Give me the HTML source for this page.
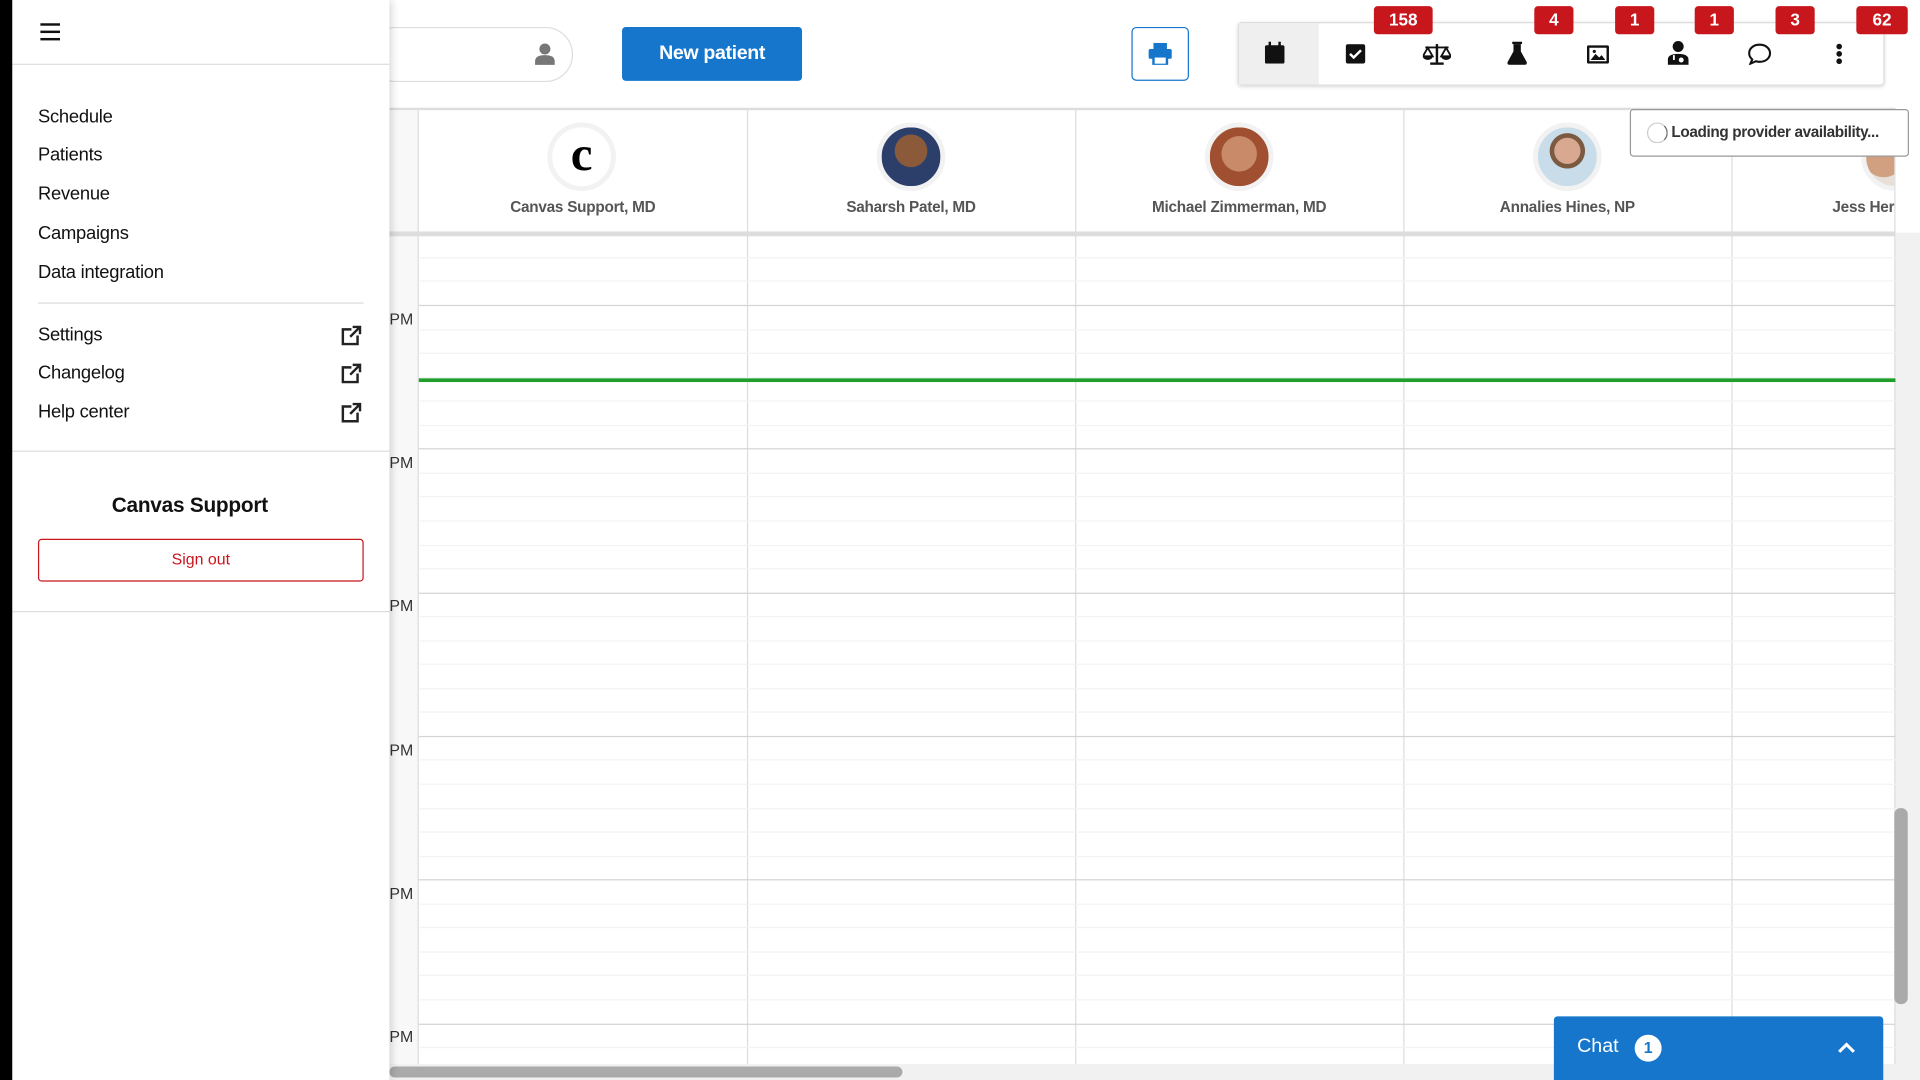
<!DOCTYPE html>
<html><head><meta charset="utf-8"><style>
*{box-sizing:border-box;margin:0;padding:0}
html,body{width:1920px;height:1080px;overflow:hidden;background:#fff;font-family:"Liberation Sans",sans-serif}
#w{position:absolute;left:0;top:0;width:1568px;height:882px;transform:scale(1.22449);transform-origin:0 0;overflow:hidden;background:#fff}
.a{position:absolute}
.sb{left:10px;top:0;width:308px;height:882px;background:#fff;box-shadow:2px 0 6px rgba(0,0,0,.15);z-index:5}
.mi{position:absolute;left:21px;font-size:15px;color:#111;letter-spacing:-.2px}
.hr{position:absolute;height:1px;background:#ddd}
.badge{position:absolute;top:5px;height:23px;background:#c8161d;color:#fff;font-weight:bold;font-size:14px;line-height:23px;text-align:center;border-radius:3px}
.col{position:absolute;top:90px;width:1px;height:792px;background:#ddd}
.av{position:absolute;top:100px;width:56px;height:56px;border-radius:50%;background:#eee;border:4px solid #f2f2f2}
.nm{position:absolute;top:162px;width:268px;text-align:center;font-size:12.5px;font-weight:bold;color:#555;letter-spacing:-.2px}
.pm{position:absolute;left:318px;font-size:13px;color:#333}
</style></head><body><div id="w">
<div class="a" style="left:0;top:0;width:10px;height:882px;background:#000;z-index:6"></div>
<div class="a sb">
 <div class="a" style="left:23px;top:19px;width:16px;height:14px;border-top:2.5px solid #111;border-bottom:2.5px solid #111"><div style="margin-top:3.5px;height:2.5px;background:#111"></div></div>
 <div class="hr" style="left:0;top:52px;width:308px"></div>
 <div class="mi" style="top:87px">Schedule</div>
 <div class="mi" style="top:118px">Patients</div>
 <div class="mi" style="top:150px">Revenue</div>
 <div class="mi" style="top:182px">Campaigns</div>
 <div class="mi" style="top:214px">Data integration</div>
 <div class="hr" style="left:21px;top:247px;width:266px"></div>
 <div class="mi" style="top:265px">Settings</div>
 <div class="mi" style="top:296px">Changelog</div>
 <div class="mi" style="top:328px">Help center</div>
 <svg class="a" style="left:268px;top:265px" width="18" height="80" viewBox="0 0 18 80" fill="none" stroke="#222" stroke-width="2"><g><path d="M14 9v7H2V4h7M10 2h6v6M16 2 8 10"/></g><g transform="translate(0,31)"><path d="M14 9v7H2V4h7M10 2h6v6M16 2 8 10"/></g><g transform="translate(0,63)"><path d="M14 9v7H2V4h7M10 2h6v6M16 2 8 10"/></g></svg>
 <div class="hr" style="left:0;top:368px;width:308px"></div>
 <div class="a" style="left:0;top:403px;width:290px;text-align:center;font-size:17px;font-weight:bold;color:#111;letter-spacing:-.2px">Canvas Support</div>
 <div class="a" style="left:21px;top:440px;width:266px;height:35px;border:1.5px solid #c8161d;border-radius:3px;color:#c8161d;font-size:13px;text-align:center;line-height:32px">Sign out</div>
 <div class="hr" style="left:0;top:499px;width:308px"></div>
</div>
<div class="a" style="left:300px;top:22px;width:168px;height:45px;border:1px solid #ddd;border-radius:23px"></div>
<svg class="a" style="left:436px;top:34px" width="18" height="20" viewBox="0 0 18 20"><circle cx="9" cy="6" r="4.5" fill="#777"/><path d="M1 19v-3q0-5 8-5t8 5v3z" fill="#777"/></svg>
<div class="a" style="left:508px;top:22px;width:147px;height:44px;background:#1576cc;border-radius:3px;color:#fff;font-weight:bold;font-size:16px;text-align:center;line-height:44px;letter-spacing:-.3px">New patient</div>
<div class="a" style="left:924px;top:22px;width:47px;height:44px;border:1.5px solid #1576cc;border-radius:4px"></div>
<svg class="a" style="left:938px;top:35px" width="19" height="18" viewBox="0 0 19 18"><rect x="4" y="0" width="11" height="5" fill="#1576cc"/><rect x="0" y="5" width="19" height="8" rx="1.5" fill="#1576cc"/><rect x="4" y="11" width="11" height="7" fill="#fff" stroke="#1576cc" stroke-width="2"/></svg>
<div class="a" style="left:1011px;top:18px;width:528px;height:52px;border:1px solid #ddd;border-radius:3px;box-shadow:0 1px 3px rgba(0,0,0,.15)"></div>
<div class="a" style="left:1012px;top:19px;width:65px;height:50px;background:#efefef"></div>
<svg class="a" style="left:1033px;top:34px" width="16" height="18" viewBox="0 0 16 18"><rect x="0" y="3" width="16" height="15" rx="1.5" fill="#111"/><rect x="3" y="0" width="2" height="4" fill="#111"/><rect x="11" y="0" width="2" height="4" fill="#111"/></svg>
<svg class="a" style="left:1099px;top:36px" width="16" height="16" viewBox="0 0 16 16"><rect width="16" height="16" rx="2" fill="#111"/><path d="M3.5 8l3 3 6-6" stroke="#fff" stroke-width="2" fill="none"/></svg>
<svg class="a" style="left:1162px;top:35px" width="23" height="18" viewBox="0 0 23 18" fill="#111"><rect x="10.5" y="1" width="2" height="15"/><rect x="6" y="16" width="11" height="2"/><rect x="2" y="3" width="19" height="1.5"/><path d="M0 11h8l-4-7zM15 11h8l-4-7z" fill="none" stroke="#111" stroke-width="1.5"/><path d="M0 11h8a4 3 0 0 1-8 0zM15 11h8a4 3 0 0 1-8 0z"/></svg>
<svg class="a" style="left:1231px;top:34px" width="16" height="19" viewBox="0 0 16 19" fill="#111"><rect x="4" y="0" width="8" height="2"/><path d="M5 2h6v6l5 9q0 2-2 2H2q-2 0-2-2l5-9z"/></svg>
<svg class="a" style="left:1296px;top:37px" width="18" height="15" viewBox="0 0 18 15"><rect width="18" height="15" rx="1.5" fill="#111"/><rect x="2" y="2" width="14" height="11" fill="#fff"/><path d="M3 12l4-5 3 3 2-2 3 4z" fill="#111"/><circle cx="6" cy="5" r="1.3" fill="#111"/></svg>
<svg class="a" style="left:1362px;top:33px" width="17" height="20" viewBox="0 0 17 20" fill="#111"><circle cx="8.5" cy="5" r="4.5"/><path d="M0 20v-4q0-5 8.5-5t8.5 5v4z"/><circle cx="11" cy="16" r="2" fill="#fff"/><path d="M5 12v4" stroke="#fff" stroke-width="1.5"/></svg>
<svg class="a" style="left:1427px;top:35px" width="20" height="18" viewBox="0 0 20 18"><path d="M10 1.5C5 1.5 1.5 4.5 1.5 8.5c0 2 1 3.8 2.5 5L2.5 17 7 15c1 .3 2 .5 3 .5 5 0 8.5-3 8.5-7s-3.5-7-8.5-7z" fill="none" stroke="#111" stroke-width="1.7"/></svg>
<svg class="a" style="left:1499px;top:35px" width="6" height="18" viewBox="0 0 6 18" fill="#111"><circle cx="3" cy="3" r="2.3"/><circle cx="3" cy="9" r="2.3"/><circle cx="3" cy="15" r="2.3"/></svg>
<div class="badge" style="left:1122px;width:48px">158</div>
<div class="badge" style="left:1253px;width:32px">4</div>
<div class="badge" style="left:1319px;width:32px">1</div>
<div class="badge" style="left:1384px;width:32px">1</div>
<div class="badge" style="left:1450px;width:32px">3</div>
<div class="badge" style="left:1516px;width:42px">62</div>
<div class="a" style="left:318px;top:88px;width:1230px;height:2px;background:#ddd"></div>
<div class="a" style="left:318px;top:90px;width:24px;height:792px;background:#f8f8f8;border-right:1px solid #ddd"></div>
<div class="col" style="left:610px"></div><div class="col" style="left:878px"></div><div class="col" style="left:1146px"></div><div class="col" style="left:1414px"></div><div class="col" style="left:1547px"></div>
<div class="a" style="left:318px;top:189px;width:1230px;height:4px;background:#ddd"></div>
<div id="grid"></div>
<div class="a" style="left:342px;top:309px;width:1206px;height:3px;background:#1e9e2a"></div>
<div class="av" style="left:447px;background:#fff;font-family:'Liberation Serif',serif;font-size:40px;font-weight:bold;text-align:center;line-height:44px;color:#000">c</div>
<div class="av" style="left:716px;background:radial-gradient(circle at 50% 40%,#8a5a3a 0 35%,#2b3f6a 36%)"></div>
<div class="av" style="left:984px;background:radial-gradient(circle at 50% 45%,#c98a6a 0 40%,#a05030 41%)"></div>
<div class="av" style="left:1252px;background:radial-gradient(circle at 50% 40%,#d8a890 0 28%,#7a5a40 29% 38%,#c8dcea 39%)"></div>
<div class="a" style="left:1414px;top:96px;width:133px;height:64px;overflow:hidden"><div class="av" style="left:106px;top:4px;background:radial-gradient(circle at 30% 50%,#d0a080 0 40%,#e8e0d8 41%)"></div></div>
<div class="nm" style="left:342px">Canvas Support, MD</div>
<div class="nm" style="left:610px">Saharsh Patel, MD</div>
<div class="nm" style="left:878px">Michael Zimmerman, MD</div>
<div class="nm" style="left:1146px">Annalies Hines, NP</div>
<div class="nm" style="left:1414px;width:133px;text-align:right;overflow:hidden;white-space:nowrap">Jess Her</div>
<div class="pm" style="top:253px">PM</div><div class="pm" style="top:370px">PM</div><div class="pm" style="top:487px">PM</div><div class="pm" style="top:605px">PM</div><div class="pm" style="top:722px">PM</div><div class="pm" style="top:839px">PM</div>
<div class="a" style="left:1331px;top:89px;width:228px;height:39px;background:#fff;border:1px solid #999;border-radius:3px;font-size:12.5px;font-weight:bold;color:#333;line-height:37px;padding-left:33px;letter-spacing:-.3px">Loading provider availability...</div>
<div class="a" style="left:1345px;top:100px;width:17px;height:17px;border-radius:50%;border:1.5px solid #ccc;border-right-color:#666"></div>
<div class="a" style="left:1548px;top:190px;width:20px;height:692px;background:#f1f1f1"></div>
<div class="a" style="left:1547px;top:660px;width:11px;height:160px;background:#aaa;border-radius:5px"></div>
<div class="a" style="left:318px;top:869px;width:1230px;height:13px;background:#f1f1f1"></div>
<div class="a" style="left:318px;top:871px;width:419px;height:9px;background:#aaa;border-radius:5px"></div>
<div class="a" style="left:1269px;top:830px;width:269px;height:52px;background:#1576cc;border-radius:3px 3px 0 0"></div>
<div class="a" style="left:1288px;top:846px;color:#fff;font-size:16px">Chat</div>
<div class="a" style="left:1335px;top:845px;width:22px;height:22px;border-radius:50%;background:#fff;color:#1576cc;font-size:13px;font-weight:bold;text-align:center;line-height:22px">1</div>
<svg class="a" style="left:1500px;top:851px" width="16" height="10" viewBox="0 0 16 10"><path d="M2 8l6-6 6 6" stroke="#fff" stroke-width="2.5" fill="none"/></svg>
</div>
<script>
var g=document.getElementById('grid'),h='';
var base=249,step=117.3;
for(var i=-1;i<6;i++){for(var j=0;j<6;j++){var y=base+i*step+j*step/6;if(y<193||y>869)continue;
h+='<div class="a" style="left:342px;top:'+y.toFixed(1)+'px;width:1206px;height:1px;background:'+(j==0?'#d4d4d4':'#f3f3f3')+'"></div>';}}
g.outerHTML=h;
</script>
</body></html>
